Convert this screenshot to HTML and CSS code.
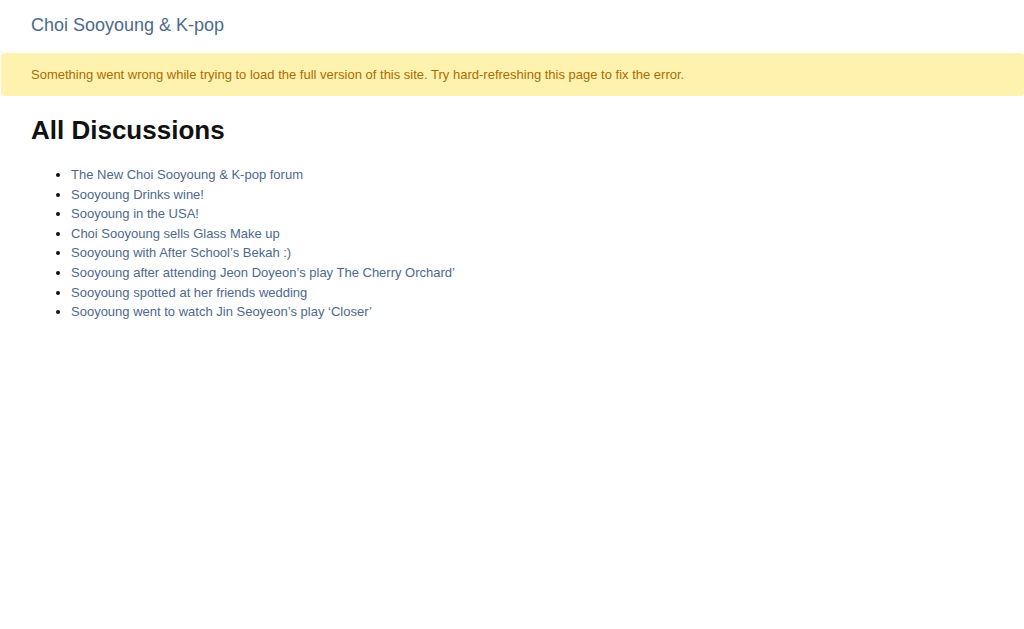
FILE: index.html
```html
<!DOCTYPE html>
<html>
<head>
<meta charset="utf-8">
<link rel="stylesheet" href="styles.css">
</head>
<body>
<header class="header">
  <a class="header-title" href="#">Choi Sooyoung &amp; K-pop</a>
</header>
<div class="alert">Something went wrong while trying to load the full version of this site. Try hard-refreshing this page to fix the error.</div>
<main class="content">
  <h2 class="title">All Discussions</h2>
  <ul class="list">
    <li><a href="#">The New Choi Sooyoung &amp; K-pop forum</a></li>
    <li><a href="#">Sooyoung Drinks wine!</a></li>
    <li><a href="#">Sooyoung in the USA!</a></li>
    <li><a href="#">Choi Sooyoung sells Glass Make up</a></li>
    <li><a href="#">Sooyoung with After School’s Bekah :)</a></li>
    <li><a href="#">Sooyoung after attending Jeon Doyeon’s play The Cherry Orchard’</a></li>
    <li><a href="#">Sooyoung spotted at her friends wedding</a></li>
    <li><a href="#">Sooyoung went to watch Jin Seoyeon’s play ‘Closer’</a></li>
  </ul>
</main>
</body>
</html>
```
FILE: styles.css
```css
html, body {
  margin: 0;
  padding: 0;
  background: #fff;
}
body {
  font-family: "Liberation Sans", Arial, sans-serif;
  font-size: 13px;
  line-height: 1.5;
  color: #111;
}
a {
  color: #4d698e;
  text-decoration: none;
}
.header {
  height: 52px;
  padding: 0 31px 2px;
  display: flex;
  align-items: center;
  box-sizing: border-box;
}
.header-title {
  font-size: 18px;
  font-weight: normal;
  color: #4d698e;
}
.alert {
  margin: 1px 0 0 1px;
  padding: 12px 30px;
  background: #fff2ae;
  color: #ad6c00;
  border-radius: 4px;
  line-height: 19px;
}
.content {
  padding: 0 31px;
}
.title {
  font-size: 26px;
  font-weight: bold;
  margin: 19px 0 20px;
  line-height: 30px;
}
.list {
  margin: 0;
  padding-left: 40px;
}
.list li {
  line-height: 19.6px;
}
```
